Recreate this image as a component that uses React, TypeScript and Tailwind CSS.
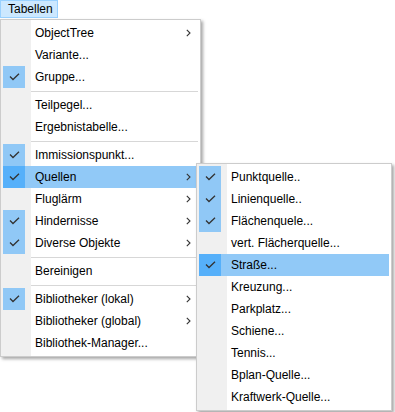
import React from "react";

type Item =
  | { sep: true }
  | { label: string; checked?: boolean; arrow?: boolean; active?: boolean };

const mainItems: Item[] = [
  { label: "ObjectTree", arrow: true },
  { label: "Variante..." },
  { label: "Gruppe...", checked: true },
  { sep: true },
  { label: "Teilpegel..." },
  { label: "Ergebnistabelle..." },
  { sep: true },
  { label: "Immissionspunkt...", checked: true },
  { label: "Quellen", checked: true, arrow: true, active: true },
  { label: "Fluglärm", arrow: true },
  { label: "Hindernisse", checked: true, arrow: true },
  { label: "Diverse Objekte", checked: true, arrow: true },
  { sep: true },
  { label: "Bereinigen" },
  { sep: true },
  { label: "Bibliotheker (lokal)", checked: true, arrow: true },
  { label: "Bibliotheker (global)", arrow: true },
  { label: "Bibliothek-Manager..." },
];

const subItems: Item[] = [
  { label: "Punktquelle..", checked: true },
  { label: "Linienquelle..", checked: true },
  { label: "Flächenquele...", checked: true },
  { label: "vert. Flächerquelle..." },
  { label: "Straße...", checked: true, active: true },
  { label: "Kreuzung..." },
  { label: "Parkplatz..." },
  { label: "Schiene..." },
  { label: "Tennis..." },
  { label: "Bplan-Quelle..." },
  { label: "Kraftwerk-Quelle..." },
];

function Check() {
  return (
    <svg width="11" height="8" viewBox="0 0 11 8">
      <polyline
        points="1,3.5 4,6.5 10,0.8"
        fill="none"
        stroke="#333"
        strokeWidth="1.3"
      />
    </svg>
  );
}

function Chevron() {
  return (
    <svg width="5" height="8" viewBox="0 0 5 8">
      <polyline points="0.8,0.8 4,4 0.8,7.2" fill="none" stroke="#333" strokeWidth="1.1" />
    </svg>
  );
}

function Menu({ items }: { items: Item[] }) {
  return (
    <div className="flex flex-col">
      {items.map((it, i) =>
        "sep" in it ? (
          <div key={i} className="h-[6px] flex items-center pl-[28px]">
            <div className="h-px w-full bg-[#d7d7d7]" />
          </div>
        ) : (
          <div
            key={i}
            className={
              it.active
                ? "h-[22px] flex items-center bg-[#91c9f7]"
                : "h-[22px] flex items-center"
            }
          >
            <div
              className={
                it.checked
                  ? it.active
                    ? "w-[22px] h-[22px] flex items-center justify-center bg-[#56b0fa]"
                    : "w-[22px] h-[22px] flex items-center justify-center bg-[#90c8f6]"
                  : "w-[22px] h-[22px]"
              }
            >
              {it.checked ? <Check /> : null}
            </div>
            <div className="w-[10px]" />
            <div className="flex-1 text-[12px] text-black leading-[22px] whitespace-nowrap">
              {it.label}
            </div>
            {it.arrow ? (
              <div className="w-[12px] flex items-center">
                <Chevron />
              </div>
            ) : null}
          </div>
        )
      )}
    </div>
  );
}

export default function App() {
  return (
    <div
      className="relative w-[395px] h-[412px] bg-white overflow-hidden"
      style={{ fontFamily: '"Liberation Sans", Arial, sans-serif' }}
    >
      <div className="h-[19px] flex bg-white">
        <div className="h-[18px] w-[58px] bg-[#cce8ff] border border-[#99d1ff] flex items-center pl-[7px] text-[12px] text-black">
          Tabellen
        </div>
      </div>

      <div className="absolute left-0 top-[19px] w-[201px] h-[338px] border border-[#cccccc] bg-[linear-gradient(to_right,#f0f0f0_30px,#ffffff_30px)] py-[2px] px-[2px] shadow-[2px_2px_3px_rgba(0,0,0,0.35)]">
        <Menu items={mainItems} />
      </div>

      <div className="absolute left-[196px] top-[163px] w-[196px] h-[248px] border border-[#cccccc] bg-[linear-gradient(to_right,#f0f0f0_30px,#ffffff_30px)] py-[2px] px-[2px] shadow-[2px_2px_3px_rgba(0,0,0,0.35)]">
        <Menu items={subItems} />
      </div>
    </div>
  );
}
